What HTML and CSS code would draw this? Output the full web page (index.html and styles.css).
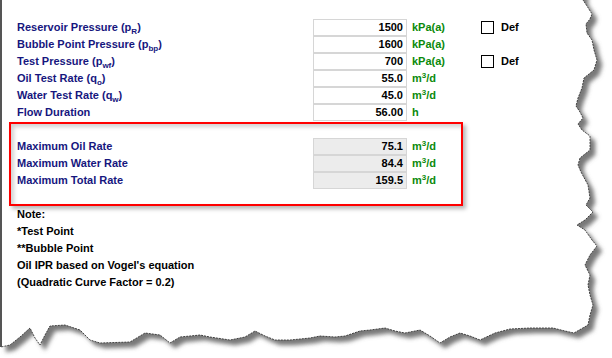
FILE: index.html
```html
<!DOCTYPE html>
<html>
<head>
<meta charset="utf-8">
<link rel="stylesheet" href="styles.css">
</head>
<body>
<div class="page">
  <svg class="paper" width="612" height="358" viewBox="0 0 612 358">
    <defs>
      <filter id="sh" x="-10%" y="-10%" width="130%" height="130%">
        <feDropShadow dx="5" dy="5" stdDeviation="2" flood-color="#606060" flood-opacity="0.85"/>
      </filter>
    </defs>
    <polygon filter="url(#sh)" fill="#fff" stroke="#222" stroke-width="0.8" stroke-dasharray="2 1"
      points="1,-10 583,-10 583,0 587,6 592,14 590,19 586,24 587,33 592,40 594,50 597,60 594,70 584,78 582,88 578,98 576,106 580,112 583,118 578,124 582,130 590,136 590,150 580,158 578,165 581,172 588,185 590,198 586,205 593,212 585,220 577,225 585,230 592,240 597,246 590,255 585,265 590,275 588,285 590,295 593,305 590,315 588,325 574,333 565,331 553,328 530,328 510,329 495,333 480,340 470,336 460,333 450,337 440,343 430,336 420,330 405,333 395,331 385,328 370,330 360,331 345,336 335,337 320,336 310,338 290,340 275,340 265,336 255,331 245,337 230,340 210,337 200,335 180,337 170,343 160,335 145,333 130,342 100,343 90,340 80,330 65,325 50,326 45,335 40,345 35,338 30,328 20,337 10,345 1,347"/>
    <line x1="1" y1="0" x2="1" y2="347" stroke="#555" stroke-width="2"/>
  </svg>

  <div class="content">
    <div class="inputs">
      <div class="row">
        <span class="label">Reservoir Pressure (p<sub>R</sub>)</span>
        <span class="box">1500</span>
        <span class="unit">kPa(a)</span>
        <span class="check"></span>
        <span class="def">Def</span>
      </div>
      <div class="row">
        <span class="label">Bubble Point Pressure (p<sub>bp</sub>)</span>
        <span class="box">1600</span>
        <span class="unit">kPa(a)</span>
      </div>
      <div class="row">
        <span class="label">Test Pressure (p<sub>wf</sub>)</span>
        <span class="box">700</span>
        <span class="unit">kPa(a)</span>
        <span class="check"></span>
        <span class="def">Def</span>
      </div>
      <div class="row">
        <span class="label">Oil Test Rate (q<sub>o</sub>)</span>
        <span class="box">55.0</span>
        <span class="unit">m<sup>3</sup>/d</span>
      </div>
      <div class="row">
        <span class="label">Water Test Rate (q<sub>w</sub>)</span>
        <span class="box">45.0</span>
        <span class="unit">m<sup>3</sup>/d</span>
      </div>
      <div class="row">
        <span class="label">Flow Duration</span>
        <span class="box">56.00</span>
        <span class="unit">h</span>
      </div>
    </div>

    <div class="results">
      <div class="row">
        <span class="label">Maximum Oil Rate</span>
        <span class="box out">75.1</span>
        <span class="unit">m<sup>3</sup>/d</span>
      </div>
      <div class="row">
        <span class="label">Maximum Water Rate</span>
        <span class="box out">84.4</span>
        <span class="unit">m<sup>3</sup>/d</span>
      </div>
      <div class="row">
        <span class="label">Maximum Total Rate</span>
        <span class="box out">159.5</span>
        <span class="unit">m<sup>3</sup>/d</span>
      </div>
    </div>

    <div class="notes">
      <div>Note:</div>
      <div>*Test Point</div>
      <div>**Bubble Point</div>
      <div>Oil IPR based on Vogel's equation</div>
      <div>(Quadratic Curve Factor = 0.2)</div>
    </div>
  </div>
</div>
</body>
</html>
```

FILE: styles.css
```css
html, body {
  margin: 0;
  padding: 0;
  background: #fff;
}

.page {
  position: relative;
  width: 612px;
  height: 358px;
  overflow: hidden;
  font-family: "Liberation Sans", Arial, sans-serif;
  font-weight: bold;
  font-size: 11px;
}

.paper {
  position: absolute;
  left: 0;
  top: 0;
  z-index: 0;
}

.content {
  position: relative;
  z-index: 1;
  padding-top: 19px;
}

.inputs {
  padding-left: 17px;
}

.row {
  display: grid;
  grid-template-columns: 296px 94px 74px 13px auto;
  column-gap: 0;
  height: 17px;
  align-items: center;
}

.label {
  color: #16167e;
  line-height: 17px;
  white-space: nowrap;
}

sub {
  font-size: 8px;
  vertical-align: -3px;
  line-height: 0;
}

sup {
  font-size: 8px;
  vertical-align: 4px;
  line-height: 0;
}

.box {
  box-sizing: border-box;
  height: 17px;
  border: 1px solid #d6d6d6;
  background: #fff;
  color: #000;
  text-align: right;
  padding-right: 3px;
  line-height: 15px;
}

.box.out {
  background: #ececec;
}

.unit {
  color: #0b8a0b;
  padding-left: 5px;
  line-height: 17px;
}

.check {
  box-sizing: border-box;
  width: 13px;
  height: 13px;
  border: 1px solid #000;
  background: #fff;
}

.def {
  color: #000;
  padding-left: 7px;
  line-height: 17px;
}

.results {
  margin-top: 1px;
  margin-left: 9px;
  width: 454px;
  box-sizing: border-box;
  border: 2px solid #ff0000;
  padding: 14px 0 15px 6px;
  box-shadow: 3px 3px 4px rgba(0, 0, 0, 0.28), inset 3px 3px 4px rgba(0, 0, 0, 0.18);
}

.notes {
  padding-left: 17px;
  color: #000;
  line-height: 17px;
}
```
